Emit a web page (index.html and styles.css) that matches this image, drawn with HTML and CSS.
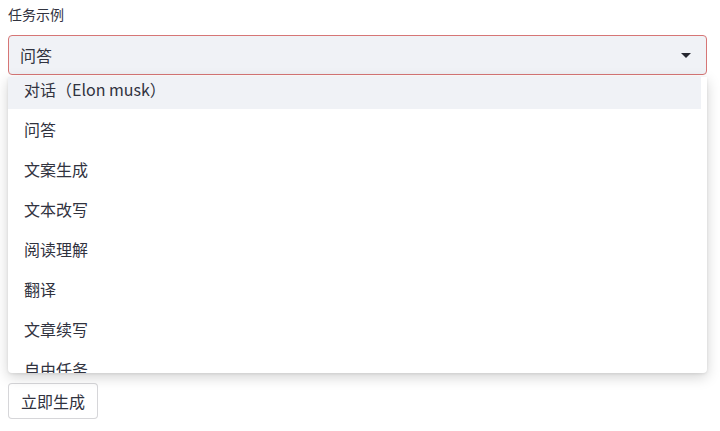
FILE: index.html
```html
<!DOCTYPE html>
<html lang="zh">
<head>
<meta charset="utf-8">
<link rel="stylesheet" href="styles.css">
</head>
<body>
<div class="page">
  <div class="field">
    <div class="label">任务示例</div>
    <div class="select-wrap">
      <div class="select">
        <span class="value">问答</span>
        <span class="caret"></span>
      </div>
      <div class="menu">
        <ul class="list">
          <li class="item active">对话（Elon musk）</li>
          <li class="item">问答</li>
          <li class="item">文案生成</li>
          <li class="item">文本改写</li>
          <li class="item">阅读理解</li>
          <li class="item">翻译</li>
          <li class="item">文章续写</li>
          <li class="item">自由任务</li>
        </ul>
      </div>
    </div>
  </div>
  <div class="actions">
    <button class="btn">立即生成</button>
  </div>
</div>
</body>
</html>
```
FILE: styles.css
```css
* { box-sizing: border-box; }
html, body { margin: 0; padding: 0; background: #fff; }
body {
  font-family: "Noto Sans CJK SC", "Noto Sans", sans-serif;
  color: rgb(49, 51, 63);
}
.page {
  padding: 3px 13px 0 8px;
  display: flex;
  flex-direction: column;
}
.label {
  font-size: 14px;
  line-height: 22px;
  height: 22px;
  margin-bottom: 10px;
}
.select-wrap { position: relative; }
.select {
  height: 40px;
  background: rgb(240, 242, 246);
  border: 1px solid rgb(214, 118, 118);
  border-radius: 4px;
  display: flex;
  align-items: center;
  justify-content: space-between;
  padding: 0 15px 1px 11px;
  font-size: 16px;
}
.value { line-height: 20px; }
.caret {
  width: 0; height: 0;
  border-left: 5px solid transparent;
  border-right: 5px solid transparent;
  border-top: 5px solid rgb(38, 39, 48);
  margin-top: 2px;
}
.menu {
  position: absolute;
  top: 42px;
  left: 0;
  right: 0;
  height: 296px;
  background: #fff;
  border-radius: 0 0 4px 4px;
  box-shadow: 0 4px 14px rgba(0, 0, 0, 0.18), 0 1px 3px rgba(0,0,0,0.08);
  overflow: hidden;
  z-index: 5;
  padding-right: 6px;
}
.list {
  list-style: none;
  margin: -8px 0 0 0;
  padding: 0;
}
.item {
  height: 40px;
  display: flex;
  align-items: center;
  padding-left: 16px;
  font-size: 16px;
}
.item.active { background: rgb(240, 242, 246); }
.actions { margin-top: 308px; }
.btn {
  font: inherit;
  font-size: 16px;
  color: rgb(49, 51, 63);
  background: #fff;
  border: 1px solid rgba(49, 51, 63, 0.2);
  border-radius: 4px;
  height: 36px;
  padding: 0 12px 1px;
  line-height: 20px;
}
```
